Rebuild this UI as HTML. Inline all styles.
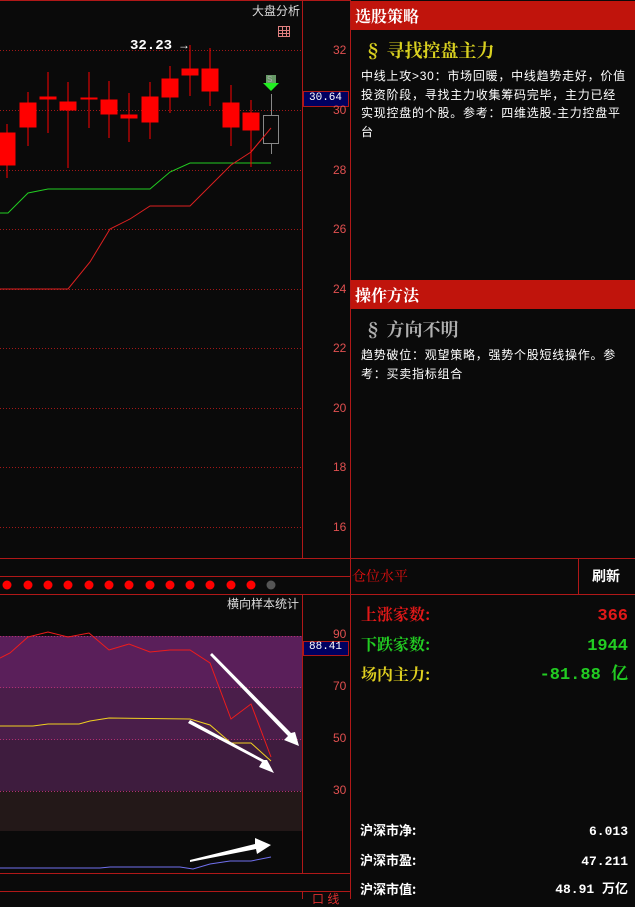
<!DOCTYPE html>
<html><head><meta charset="utf-8"><style>
body{margin:0;background:#0a0a0a;width:635px;height:899px;overflow:hidden;position:relative;font-family:"Liberation Sans","Noto Sans CJK SC",sans-serif}
.a{position:absolute;white-space:nowrap}
.hd{position:absolute;left:351px;width:284px;height:29px;background:#c0140c;color:#fff;font-weight:bold;font-size:16px;line-height:29px;padding-left:4px;box-sizing:border-box;font-family:"Noto Serif CJK SC","Noto Sans CJK SC",serif}
.tx{position:absolute;left:361px;width:274px;color:#fff;font-size:12px;line-height:18.5px;letter-spacing:0.75px;white-space:nowrap}
.st{font-family:"Noto Serif CJK SC","Noto Sans CJK SC",serif;font-weight:bold;font-size:16px;line-height:24px}
.nm{font-family:"Liberation Mono","Noto Serif CJK SC",monospace;font-weight:bold;font-size:17px;line-height:24px}
.bt{font-family:"Noto Sans CJK SC",sans-serif;font-weight:bold;font-size:13px;color:#fff;line-height:20px}
.bn{font-family:"Liberation Mono","Noto Sans CJK SC",monospace;font-weight:bold;font-size:13px;color:#fff;line-height:20px}
</style></head><body>
<svg width="635" height="899" style="position:absolute;left:0;top:0">
<g stroke="#a01818" stroke-dasharray="1,2" stroke-width="1">
<line x1="0" y1="50.5" x2="302" y2="50.5"/><line x1="0" y1="110.5" x2="302" y2="110.5"/><line x1="0" y1="170.5" x2="302" y2="170.5"/><line x1="0" y1="229.5" x2="302" y2="229.5"/><line x1="0" y1="289.5" x2="302" y2="289.5"/><line x1="0" y1="348.5" x2="302" y2="348.5"/><line x1="0" y1="408.5" x2="302" y2="408.5"/><line x1="0" y1="467.5" x2="302" y2="467.5"/><line x1="0" y1="527.5" x2="302" y2="527.5"/>
</g>
<rect x="0" y="636" width="302" height="52" fill="#5a1f5a"/>
<rect x="0" y="688" width="302" height="52" fill="#4a1e4a"/>
<rect x="0" y="740" width="302" height="51" fill="#3e1c3e"/>
<rect x="0" y="791" width="302" height="40" fill="#231818"/>
<g stroke="#b03070" stroke-dasharray="1,2"><line x1="0" y1="636.5" x2="302" y2="636.5"/><line x1="0" y1="687.5" x2="302" y2="687.5"/><line x1="0" y1="739.5" x2="302" y2="739.5"/><line x1="0" y1="791.5" x2="302" y2="791.5"/></g>
<g stroke="#b01818" stroke-width="1">
<line x1="302.5" y1="0" x2="302.5" y2="558"/><line x1="302.5" y1="594" x2="302.5" y2="874"/><line x1="302.5" y1="892" x2="302.5" y2="899"/>
<line x1="350.5" y1="0" x2="350.5" y2="899"/>
<line x1="0" y1="0.5" x2="350" y2="0.5"/>
<line x1="0" y1="558.5" x2="635" y2="558.5"/><line x1="0" y1="576.5" x2="350" y2="576.5"/><line x1="0" y1="594.5" x2="635" y2="594.5"/>
<line x1="578.5" y1="558" x2="578.5" y2="594"/>
<line x1="0" y1="873.5" x2="350" y2="873.5"/><line x1="0" y1="891.5" x2="350" y2="891.5"/>
</g>
<polyline fill="none" stroke="#22cc22" points="0,213 8,213 28,193 48,189 150,189 170,172 190,163 271,163"/>
<polyline fill="none" stroke="#dd2020" points="0,289 68,289 90,262 110,229 130,219 150,206 190,206 231,165 251,152 271,128"/>
<g fill="#ff0000" stroke="#ff0000">
<line x1="7" y1="124" x2="7" y2="178"/><rect x="0" y="133" width="15" height="32"/>
<line x1="28" y1="92" x2="28" y2="146"/><rect x="20" y="103" width="16" height="24"/>
<line x1="48" y1="72" x2="48" y2="133"/><rect x="40" y="97" width="16" height="2"/>
<line x1="68" y1="82" x2="68" y2="168"/><rect x="60" y="102" width="16" height="8"/>
<line x1="89" y1="72" x2="89" y2="128"/><rect x="81" y="98" width="16" height="1"/>
<line x1="109" y1="81" x2="109" y2="138"/><rect x="101" y="100" width="16" height="14"/>
<line x1="129" y1="93" x2="129" y2="142"/><rect x="121" y="115" width="16" height="3"/>
<line x1="150" y1="82" x2="150" y2="139"/><rect x="142" y="97" width="16" height="25"/>
<line x1="170" y1="66" x2="170" y2="113"/><rect x="162" y="79" width="16" height="18"/>
<line x1="190" y1="45" x2="190" y2="96"/><rect x="182" y="69" width="16" height="6"/>
<line x1="210" y1="48" x2="210" y2="106"/><rect x="202" y="69" width="16" height="22"/>
<line x1="231" y1="85" x2="231" y2="146"/><rect x="223" y="103" width="16" height="24"/>
<line x1="251" y1="100" x2="251" y2="167"/><rect x="243" y="113" width="16" height="17"/>
</g>
<line x1="271.5" y1="94" x2="271.5" y2="154" stroke="#888"/>
<rect x="263.5" y="115.5" width="15" height="28" fill="#0a0a0a" stroke="#888"/>
<polyline fill="none" stroke="#dd2020" points="251,152 271,128"/>
<rect x="266" y="75" width="10" height="8" fill="#669966"/>
<polygon points="263,83 279,83 271,91" fill="#22ee22"/>
<text x="267" y="82" font-size="8" fill="#aaa" font-family="Liberation Sans">S</text>
<g fill="none" stroke="#e08080" stroke-width="1"><rect x="278.5" y="26.5" width="11" height="10"/><line x1="282.5" y1="26" x2="282.5" y2="37"/><line x1="286.5" y1="26" x2="286.5" y2="37"/><line x1="278" y1="30.5" x2="290" y2="30.5"/><line x1="278" y1="33.5" x2="290" y2="33.5"/></g>
<rect x="303.5" y="91.5" width="45" height="15" fill="#000060" stroke="#b01818"/>
<rect x="303.5" y="641.5" width="45" height="14" fill="#000060" stroke="#b01818"/>
<g fill="#ff0000"><circle cx="7" cy="585" r="4.5"/><circle cx="28" cy="585" r="4.5"/><circle cx="48" cy="585" r="4.5"/><circle cx="68" cy="585" r="4.5"/><circle cx="89" cy="585" r="4.5"/><circle cx="109" cy="585" r="4.5"/><circle cx="129" cy="585" r="4.5"/><circle cx="150" cy="585" r="4.5"/><circle cx="170" cy="585" r="4.5"/><circle cx="190" cy="585" r="4.5"/><circle cx="210" cy="585" r="4.5"/><circle cx="231" cy="585" r="4.5"/><circle cx="251" cy="585" r="4.5"/></g>
<circle cx="271" cy="585" r="4.5" fill="#555"/>
<polyline fill="none" stroke="#ee1c1c" points="0,658 10,653 28,637 48,632 68,637 89,633 109,650 129,644 150,652 170,650 190,650 210,663 231,719 251,704 271,757"/>
<polyline fill="none" stroke="#f0d020" points="0,726 33,726 48,724 79,724 90,721 109,718 190,719 210,725 231,743 251,743 271,761"/>
<polyline fill="none" stroke="#7070ee" points="0,868 100,868 110,867 180,867 193,869 210,864 230,861 251,861 271,857"/>
<g fill="#fff">
<polygon points="210,655 288,736 284,740 299,746 295,732 291,733 212,653"/>
<polygon points="188,723 262,762 259,767 274,773 267,760 264,760 190,720"/>
<polygon points="190,862 256,849 257,854 271,845 255,838 255,844 190,860"/>
</g>
</svg>
<div class="a" style="left:252px;top:2px;color:#ddd;font-size:12px">大盘分析</div>
<div class="a" style="left:130px;top:38px;color:#fff;font-size:14px;font-weight:bold;font-family:'Liberation Mono',monospace">32.23 <span style="font-weight:normal;font-size:12px">→</span></div>
<div class="a" style="left:333px;top:43px;color:#e05050;font-size:12px">32</div>
<div class="a" style="left:333px;top:103px;color:#e05050;font-size:12px">30</div>
<div class="a" style="left:333px;top:163px;color:#e05050;font-size:12px">28</div>
<div class="a" style="left:333px;top:222px;color:#e05050;font-size:12px">26</div>
<div class="a" style="left:333px;top:282px;color:#e05050;font-size:12px">24</div>
<div class="a" style="left:333px;top:341px;color:#e05050;font-size:12px">22</div>
<div class="a" style="left:333px;top:401px;color:#e05050;font-size:12px">20</div>
<div class="a" style="left:333px;top:460px;color:#e05050;font-size:12px">18</div>
<div class="a" style="left:333px;top:520px;color:#e05050;font-size:12px">16</div>
<div class="a" style="left:309px;top:92px;color:#fff;font-size:11px;font-family:'Liberation Mono',monospace">30.64</div>
<div class="a" style="left:227px;top:595px;color:#ddd;font-size:12px">横向样本统计</div>
<div class="a" style="left:333px;top:627px;color:#e05050;font-size:12px">90</div>
<div class="a" style="left:333px;top:679px;color:#e05050;font-size:12px">70</div>
<div class="a" style="left:333px;top:731px;color:#e05050;font-size:12px">50</div>
<div class="a" style="left:333px;top:783px;color:#e05050;font-size:12px">30</div>
<div class="a" style="left:309px;top:641px;color:#fff;font-size:11px;font-family:'Liberation Mono',monospace">88.41</div>
<div class="a" style="left:312px;top:890px;color:#e03030;font-size:12px">口 线</div>

<div class="hd" style="top:1px">选股策略</div>
<div class="a" style="left:364px;top:37px;color:#d8d020;font-size:18px;font-weight:bold;font-family:'Noto Serif CJK SC',serif">§ 寻找控盘主力</div>
<div class="tx" style="top:67px">中线上攻&gt;30：市场回暖，中线趋势走好，价值<br>投资阶段，寻找主力收集筹码完毕，主力已经<br>实现控盘的个股。参考：四维选股-主力控盘平<br>台</div>
<div class="hd" style="top:280px">操作方法</div>
<div class="a" style="left:364px;top:316px;color:#b0b0b0;font-size:18px;font-weight:bold;font-family:'Noto Serif CJK SC',serif">§ 方向不明</div>
<div class="tx" style="top:346px">趋势破位：观望策略，强势个股短线操作。参<br>考：买卖指标组合</div>

<div class="a" style="left:352px;top:566px;color:#e01010;font-size:14px;font-family:'Noto Serif CJK SC',serif">仓位水平</div>
<div class="a" style="left:592px;top:566px;color:#fff;font-size:14px;font-weight:bold">刷新</div>
<div class="a st" style="left:361px;top:602px;color:#e01818">上涨家数:</div>
<div class="a nm" style="right:7px;top:605px;color:#e01818">366</div>
<div class="a st" style="left:361px;top:632px;color:#22cc22">下跌家数:</div>
<div class="a nm" style="right:7px;top:635px;color:#22cc22">1944</div>
<div class="a st" style="left:361px;top:662px;color:#e0d020">场内主力:</div>
<div class="a nm" style="right:7px;top:664px;color:#22cc22">-81.88 亿</div>
<div class="a bt" style="left:360px;top:820px">沪深市净:</div>
<div class="a bn" style="right:7px;top:822px">6.013</div>
<div class="a bt" style="left:360px;top:850px">沪深市盈:</div>
<div class="a bn" style="right:7px;top:852px">47.211</div>
<div class="a bt" style="left:360px;top:879px">沪深市值:</div>
<div class="a bn" style="right:7px;top:880px">48.91 万亿</div>
</body></html>
